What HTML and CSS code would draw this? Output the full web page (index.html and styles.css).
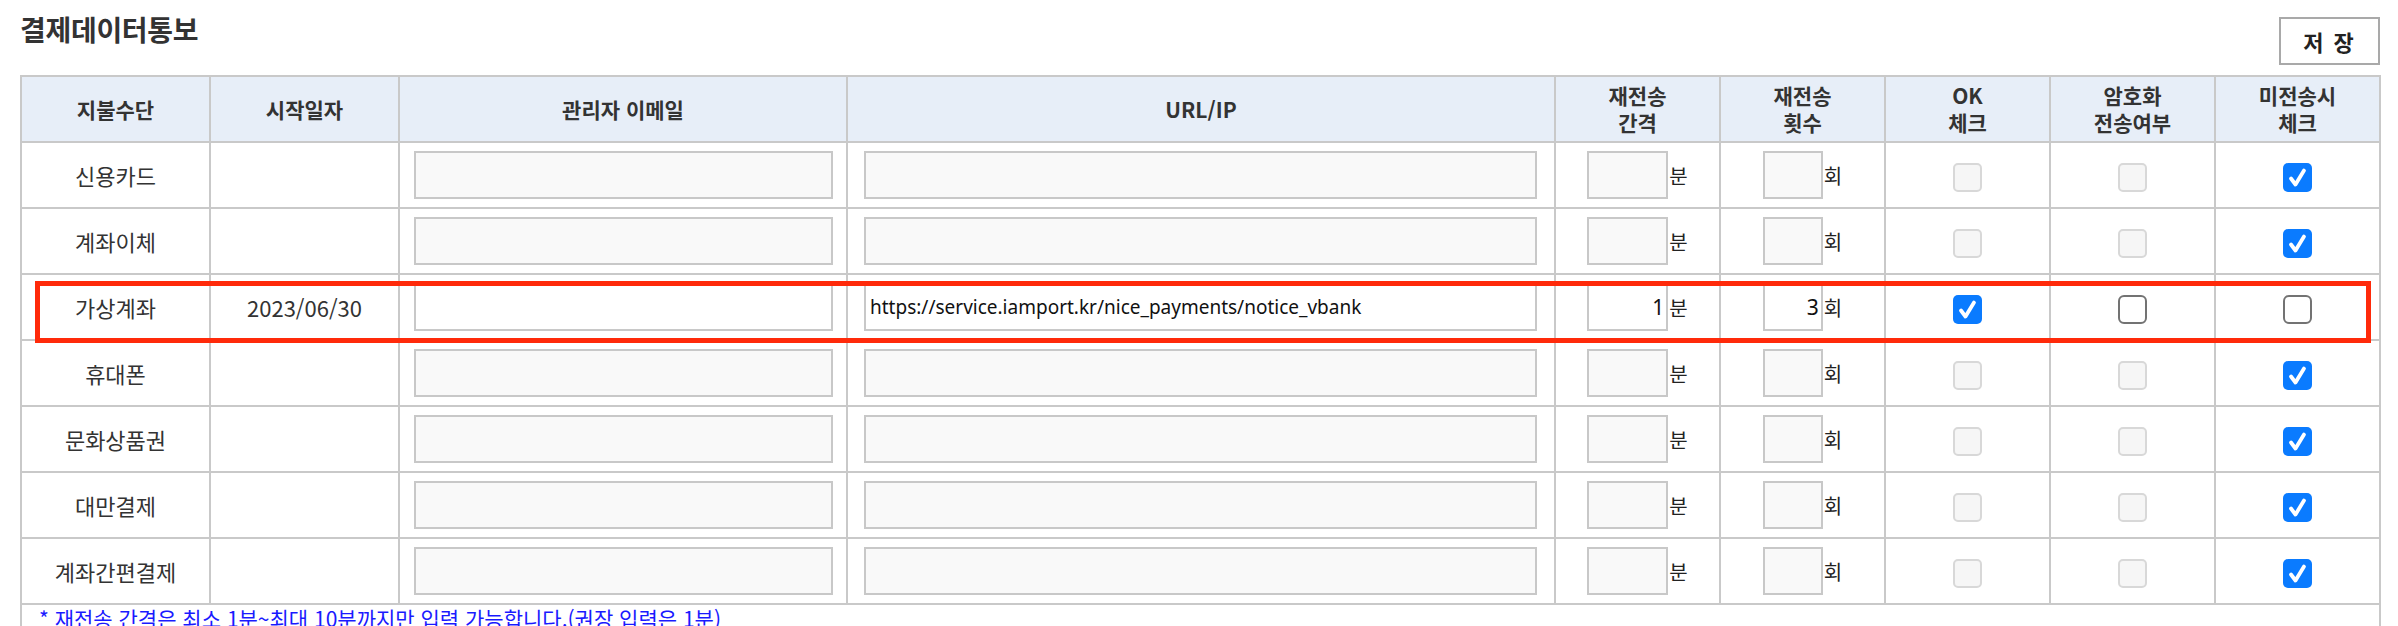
FILE: index.html
```html
<!DOCTYPE html>
<html lang="ko">
<head>
<meta charset="utf-8">
<title>결제데이터통보</title>
<link rel="stylesheet" href="styles.css">
</head>
<body>
<div class="page">
  <div class="topbar">
    <h1 class="title">결제데이터통보</h1>
    <button class="save" type="button">저 장</button>
  </div>
  <div class="table-wrap">
    <table class="grid">
      <colgroup>
        <col class="c-name"><col class="c-date"><col class="c-email"><col class="c-url">
        <col class="c-s"><col class="c-s"><col class="c-s"><col class="c-s"><col class="c-s">
      </colgroup>
      <thead>
        <tr>
          <th>지불수단</th><th>시작일자</th><th>관리자 이메일</th><th>URL/IP</th>
          <th>재전송<br>간격</th><th>재전송<br>횟수</th><th>OK<br>체크</th><th>암호화<br>전송여부</th><th>미전송시<br>체크</th>
        </tr>
      </thead>
      <tbody>
        <tr>
          <td>신용카드</td><td></td>
          <td class="em"><input class="txt dis" type="text" disabled></td>
          <td class="url"><input class="txt dis" type="text" disabled></td>
          <td><span class="unit"><input class="sm wi dis" type="text" disabled>분</span></td>
          <td><span class="unit"><input class="sm wc dis" type="text" disabled>회</span></td>
          <td><span class="cb off"></span></td>
          <td><span class="cb off"></span></td>
          <td><span class="cb on"><svg viewBox="0 0 29 29"><path d="M8 15.5 L12.5 21.5 L21 7.5"/></svg></span></td>
        </tr>
        <tr>
          <td>계좌이체</td><td></td>
          <td class="em"><input class="txt dis" type="text" disabled></td>
          <td class="url"><input class="txt dis" type="text" disabled></td>
          <td><span class="unit"><input class="sm wi dis" type="text" disabled>분</span></td>
          <td><span class="unit"><input class="sm wc dis" type="text" disabled>회</span></td>
          <td><span class="cb off"></span></td>
          <td><span class="cb off"></span></td>
          <td><span class="cb on"><svg viewBox="0 0 29 29"><path d="M8 15.5 L12.5 21.5 L21 7.5"/></svg></span></td>
        </tr>
        <tr class="active">
          <td>가상계좌</td><td>2023/06/30</td>
          <td class="em"><input class="txt" type="text"></td>
          <td class="url"><input class="txt" type="text" value="https://service.iamport.kr/nice_payments/notice_vbank"></td>
          <td><span class="unit"><input class="sm wi" type="text" value="1">분</span></td>
          <td><span class="unit"><input class="sm wc" type="text" value="3">회</span></td>
          <td><span class="cb on"><svg viewBox="0 0 29 29"><path d="M8 15.5 L12.5 21.5 L21 7.5"/></svg></span></td>
          <td><span class="cb empty"></span></td>
          <td><span class="cb empty"></span></td>
        </tr>
        <tr>
          <td>휴대폰</td><td></td>
          <td class="em"><input class="txt dis" type="text" disabled></td>
          <td class="url"><input class="txt dis" type="text" disabled></td>
          <td><span class="unit"><input class="sm wi dis" type="text" disabled>분</span></td>
          <td><span class="unit"><input class="sm wc dis" type="text" disabled>회</span></td>
          <td><span class="cb off"></span></td>
          <td><span class="cb off"></span></td>
          <td><span class="cb on"><svg viewBox="0 0 29 29"><path d="M8 15.5 L12.5 21.5 L21 7.5"/></svg></span></td>
        </tr>
        <tr>
          <td>문화상품권</td><td></td>
          <td class="em"><input class="txt dis" type="text" disabled></td>
          <td class="url"><input class="txt dis" type="text" disabled></td>
          <td><span class="unit"><input class="sm wi dis" type="text" disabled>분</span></td>
          <td><span class="unit"><input class="sm wc dis" type="text" disabled>회</span></td>
          <td><span class="cb off"></span></td>
          <td><span class="cb off"></span></td>
          <td><span class="cb on"><svg viewBox="0 0 29 29"><path d="M8 15.5 L12.5 21.5 L21 7.5"/></svg></span></td>
        </tr>
        <tr>
          <td>대만결제</td><td></td>
          <td class="em"><input class="txt dis" type="text" disabled></td>
          <td class="url"><input class="txt dis" type="text" disabled></td>
          <td><span class="unit"><input class="sm wi dis" type="text" disabled>분</span></td>
          <td><span class="unit"><input class="sm wc dis" type="text" disabled>회</span></td>
          <td><span class="cb off"></span></td>
          <td><span class="cb off"></span></td>
          <td><span class="cb on"><svg viewBox="0 0 29 29"><path d="M8 15.5 L12.5 21.5 L21 7.5"/></svg></span></td>
        </tr>
        <tr>
          <td>계좌간편결제</td><td></td>
          <td class="em"><input class="txt dis" type="text" disabled></td>
          <td class="url"><input class="txt dis" type="text" disabled></td>
          <td><span class="unit"><input class="sm wi dis" type="text" disabled>분</span></td>
          <td><span class="unit"><input class="sm wc dis" type="text" disabled>회</span></td>
          <td><span class="cb off"></span></td>
          <td><span class="cb off"></span></td>
          <td><span class="cb on"><svg viewBox="0 0 29 29"><path d="M8 15.5 L12.5 21.5 L21 7.5"/></svg></span></td>
        </tr>
      </tbody>
      <tfoot>
        <tr>
          <td class="note" colspan="9">* 재전송 간격은 최소 1분~최대 10분까지만 입력 가능합니다.(권장 입력은 1분)</td>
        </tr>
      </tfoot>
    </table>
    <div class="highlight"></div>
  </div>
</div>
</body>
</html>
```

FILE: styles.css
```css
* { box-sizing: border-box; }
html, body { margin: 0; padding: 0; background: #fff; }
body {
  font-family: "Noto Sans CJK KR", "Noto Sans", sans-serif;
  color: #333;
  overflow: hidden;
}
.page { padding: 0 18px 0 20px; }

.topbar {
  display: flex;
  justify-content: space-between;
  align-items: flex-start;
  height: 75px;
}
.title {
  margin: 0;
  padding-top: 10px;
  font-size: 28px;
  line-height: 38px;
  font-weight: 700;
  color: #333;
  letter-spacing: -0.3px;
}
.save {
  margin-top: 17px;
  margin-right: 0;
  width: 101px;
  height: 48px;
  background: #fff;
  border: 2px solid #a9a9a9;
  font-family: "Noto Sans CJK KR", sans-serif;
  font-size: 22px;
  font-weight: 700;
  color: #222;
  padding: 0;
  letter-spacing: 2px;
}

.table-wrap { position: relative; }
.grid {
  border-collapse: collapse;
  table-layout: fixed;
  width: 2361px;
}
.c-name, .c-date { width: 189px; }
.c-email { width: 448px; }
.c-url { width: 708px; }
.c-s { width: 165px; }

.grid th, .grid td {
  border: 2px solid #c9c9c9;
  text-align: center;
  vertical-align: middle;
  padding: 0;
}
.grid th {
  background: #e7eef8;
  height: 66px;
  font-size: 21px;
  line-height: 27px;
  font-weight: 700;
  color: #333;
}
.grid tbody td {
  height: 66px;
  font-size: 22px;
  color: #333;
}
.grid td.em { padding: 0 13px 0 14px; }
.grid td.url { padding: 0 17px 0 16px; }

.txt {
  display: block;
  width: 100%;
  height: 48px;
  border: 2px solid #c8c8c8;
  background: #fff;
  padding: 0 4px;
  font-family: "Noto Sans", "DejaVu Sans", sans-serif;
  font-size: 19px;
  color: #111;
  outline: none;
}
.txt.dis, .sm.dis { background: #f9f9f9; }

.unit {
  display: inline-flex;
  align-items: center;
  font-size: 20px;
  color: #222;
}
.sm {
  height: 48px;
  border: 2px solid #c8c8c8;
  background: #fff;
  text-align: right;
  padding: 0 2px;
  font-family: "Noto Sans", "DejaVu Sans", sans-serif;
  font-size: 21px;
  color: #111;
  margin-right: 1px;
  outline: none;
}
.wi { width: 81px; }
.wc { width: 60px; }

.cb {
  display: inline-block;
  width: 29px;
  height: 29px;
  border-radius: 5px;
  vertical-align: middle;
}
.cb.off { background: #f6f6f6; border: 2px solid #d8d8d8; }
.cb.empty { background: #fff; border: 2px solid #737373; border-radius: 6px; }
.cb.on { background: #0a7bff; }
.cb svg { display: block; width: 29px; height: 29px; }
.cb svg path { fill: none; stroke: #fff; stroke-width: 3.8; stroke-linecap: round; stroke-linejoin: round; }

.grid td.note {
  text-align: left;
  vertical-align: top;
  padding: 0 0 0 17px;
  height: 40px;
  border-bottom: none;
  font-size: 21px;
  line-height: 26px;
  color: #1a1aff;
}

.highlight {
  position: absolute;
  left: 15px;
  top: 206px;
  width: 2336px;
  height: 62px;
  border: 5px solid #ff2a0a;
  pointer-events: none;
}
```
